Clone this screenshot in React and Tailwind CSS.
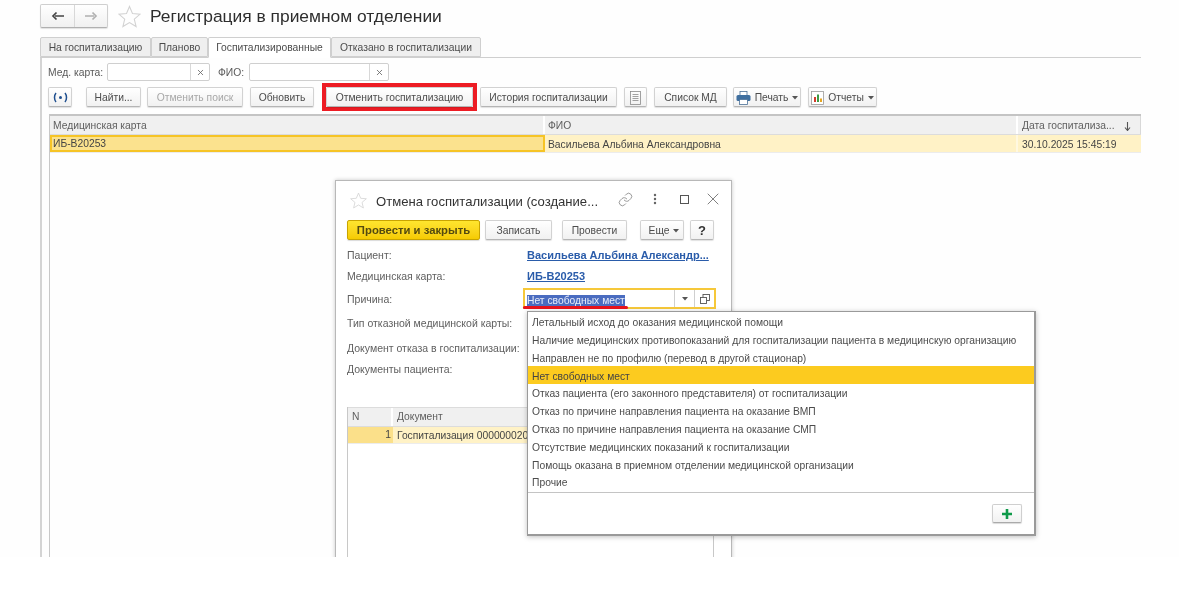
import React from "react";
import { X, Link, EllipsisVertical } from "lucide-react";

const Star = ({ size, color = "#d2d2d2" }) => (
  <svg width={size} height={size} viewBox="0 0 24 24" fill="none" stroke={color} strokeWidth="1.1" className="shrink-0">
    <path d="M12 1.5l3.1 7.4 8 .6-6.1 5.2 1.9 7.8L12 18.3l-6.9 4.2L7 14.7.9 9.5l8-.6z" />
  </svg>
);

const Caret = () => (
  <svg width="6" height="4" viewBox="0 0 6 4" className="shrink-0"><path d="M0 0h6L3 3.5z" fill="#555" /></svg>
);

const Btn = ({ w, children, disabled, className = "" }) => (
  <div
    className={`h-5 shrink-0 flex items-center justify-center gap-1 pt-px rounded-[2px] border border-[#d2d2d2] border-b-[#b5b5b5] bg-gradient-to-b from-white to-[#f1f1f1] shadow-[0_1px_1px_rgba(0,0,0,0.12)] text-[10.3px] ${disabled ? "text-[#a8a8a8]" : "text-[#4c4c4c]"} ${className}`}
    style={{ width: w }}
  >
    {children}
  </div>
);

const Tab = ({ w, active, children }) => (
  <div
    className={`h-[20px] shrink-0 flex items-center justify-center pt-px rounded-t-[2px] border border-[#cfcfcf] text-[10.3px] text-[#4c4c4c] ${active ? "bg-white border-b-white h-[21px] -mb-px z-10" : "bg-[#efefef]"}`}
    style={{ width: w }}
  >
    {children}
  </div>
);

const Field = ({ w }) => (
  <div className="h-[18px] shrink-0 flex rounded-[2px] border border-[#cfcfcf] bg-white" style={{ width: w }}>
    <div className="flex-1" />
    <div className="w-[19px] border-l border-[#d8d8d8] flex items-center justify-center">
      <X size={9} strokeWidth={2.2} color="#666" />
    </div>
  </div>
);

const items = [
  "Летальный исход до оказания медицинской помощи",
  "Наличие медицинских противопоказаний для госпитализации пациента в медицинскую организацию",
  "Направлен не по профилю (перевод в другой стационар)",
  "Нет свободных мест",
  "Отказ пациента (его законного представителя) от госпитализации",
  "Отказ по причине направления пациента на оказание ВМП",
  "Отказ по причине направления пациента на оказание СМП",
  "Отсутствие медицинских показаний к госпитализации",
  "Помощь оказана в приемном отделении медицинской организации",
  "Прочие",
];

const Row = ({ h, label, children, className = "" }) => (
  <div className={`flex items-center shrink-0 ${className}`} style={{ height: h }}>
    <div className="w-[176px] shrink-0 pt-[2px] text-[10.5px] text-[#606060]">{label}</div>
    {children}
  </div>
);

export default function App() {
  return (
    <div className="relative h-[610px] w-[1179px] overflow-hidden bg-white blur-[0.5px] text-[#4c4c4c]" style={{ fontFamily: '"Liberation Sans", Arial, sans-serif' }}>
      <div className="relative h-[557px] overflow-hidden bg-[#fefefe] pl-10 pr-[38px] pt-1 flex flex-col">
        {/* header */}
        <div className="flex items-center h-6 shrink-0">
          <div className="w-[68px] h-6 flex rounded-[2px] border border-[#cfcfcf] border-b-[#b0b0b0] bg-gradient-to-b from-white to-[#f0f0f0] shadow-[0_1px_1px_rgba(0,0,0,0.12)]">
            <div className="w-[34px] flex items-center justify-center border-r border-[#d8d8d8]">
              <svg width="14" height="10" viewBox="0 0 14 10"><path d="M13 5H4M5.5 1.5L2 5l3.5 3.5" stroke="#444" strokeWidth="1.7" fill="none" /></svg>
            </div>
            <div className="flex-1 flex items-center justify-center">
              <svg width="14" height="10" viewBox="0 0 14 10"><path d="M1 5h9M8.5 1.5L12 5 8.5 8.5" stroke="#b0b0b0" strokeWidth="1.7" fill="none" /></svg>
            </div>
          </div>
          <div className="ml-[10px]"><Star size={23} /></div>
          <div className="ml-[9px] text-[17.4px] leading-6 text-[#2e2e2e]">Регистрация в приемном отделении</div>
        </div>

        {/* tabs */}
        <div className="flex mt-[9px] h-[20px] shrink-0 border-b border-[#cfcfcf] box-content">
          <Tab w={111}>На госпитализацию</Tab>
          <Tab w={57}>Планово</Tab>
          <Tab w={123} active>Госпитализированные</Tab>
          <Tab w={150}>Отказано в госпитализации</Tab>
        </div>

        {/* panel */}
        <div className="flex-1 flex flex-col border-l-2 border-[#d4d4d4] pl-[6px] pt-[5px]">
          <div className="flex items-center h-[18px] shrink-0 text-[10.3px]">
            <div className="w-[59px] pt-px text-[#5a5a5a]">Мед. карта:</div>
            <Field w={103} />
            <div className="ml-2 w-[31px] pt-px text-[#5a5a5a]">ФИО:</div>
            <Field w={140} />
          </div>

          <div className="flex items-center h-5 mt-[6px] shrink-0">
            <Btn w={24} className="border-[#c4c4c4]">
              <svg width="15" height="11" viewBox="0 0 15 11" fill="none" stroke="#1f4f8f" strokeWidth="1.5">
                <path d="M3 1C1 3.5 1 7.5 3 10M12 1c2 2.5 2 6.5 0 9" />
                <circle cx="7.5" cy="5.5" r="1.5" fill="#1f4f8f" stroke="none" />
              </svg>
            </Btn>
            <Btn w={55} className="ml-[14px]">Найти...</Btn>
            <Btn w={96} disabled className="ml-[6px]">Отменить поиск</Btn>
            <Btn w={64} className="ml-[7px]">Обновить</Btn>
            <div className="ml-2 shrink-0 border-4 border-[#ed1c24] h-7 flex items-center">
              <Btn w={147}>Отменить госпитализацию</Btn>
            </div>
            <Btn w={137} className="ml-[3px]">История госпитализации</Btn>
            <Btn w={23} className="ml-[7px]">
              <svg width="11" height="14" viewBox="0 0 11 14" fill="none" stroke="#8a8a8a" strokeWidth="0.8">
                <rect x="0.5" y="0.5" width="10" height="13" />
                <path d="M2.5 3.5h6M2.5 5.5h6M2.5 7.5h6M2.5 9.5h6" />
              </svg>
            </Btn>
            <Btn w={73} className="ml-[7px]">Список МД</Btn>
            <Btn w={68} className="ml-[6px]">
              <svg width="15" height="14" viewBox="0 0 15 14">
                <rect x="4" y="0.5" width="7" height="4" fill="#fff" stroke="#4a6f96" strokeWidth="0.8" />
                <rect x="0.5" y="4" width="14" height="6" rx="1.5" fill="#3f6f9f" />
                <rect x="3.5" y="8.5" width="8" height="5" fill="#fff" stroke="#4a6f96" strokeWidth="0.8" />
              </svg>
              <span>Печать</span>
              <Caret />
            </Btn>
            <Btn w={69} className="ml-[7px]">
              <svg width="13" height="14" viewBox="0 0 13 14">
                <rect x="0.5" y="0.5" width="12" height="13" fill="#fff" stroke="#999" strokeWidth="0.8" />
                <rect x="3" y="6" width="2" height="5" fill="#d23c2c" />
                <rect x="6" y="3.5" width="2" height="7.5" fill="#3c9a44" />
                <rect x="9" y="7.5" width="2" height="3.5" fill="#e6a520" />
              </svg>
              <span>Отчеты</span>
              <Caret />
            </Btn>
          </div>

          {/* table */}
          <div className="mt-[7px] ml-px flex-1 border-l border-[#c8c8c8] text-[10.3px] flex flex-col">
            <div className="flex h-[21px] shrink-0 border-t-2 border-[#c4c4c4] border-b border-b-[#dcdcdc] bg-[#f0f0f0] text-[#5e5e5e]">
              <div className="w-[495px] pl-[3px] pt-[2px] flex items-center border-r-2 border-white">Медицинская карта</div>
              <div className="w-[473px] pl-[3px] pt-[2px] flex items-center border-r-2 border-white">ФИО</div>
              <div className="flex-1 pl-1 pr-[9px] pt-[2px] flex items-center justify-between border-r border-[#d8d8d8]">
                <span>Дата госпитализа...</span>
                <svg width="7" height="9" viewBox="0 0 7 9" fill="none" stroke="#555" strokeWidth="1.1"><path d="M3.5 0v8M1 5.5l2.5 3 2.5-3" /></svg>
              </div>
            </div>
            <div className="flex h-[18px] shrink-0 bg-[#fff2c6] border-b border-[#ececec] text-[#444]">
              <div className="w-[495px] pl-px pt-px flex items-center bg-[#fbe28e] border-2 border-[#f6c426]">ИБ-В20253</div>
              <div className="w-[473px] pl-[3px] pt-[2px] flex items-center border-r-2 border-[#fff8e0]">Васильева Альбина Александровна</div>
              <div className="flex-1 pl-1 pt-[2px] flex items-center">30.10.2025 15:45:19</div>
            </div>
          </div>
        </div>

        {/* dialog */}
        <div className="absolute left-[335px] top-[180px] w-[397px] h-[400px] bg-white border border-[#b8b8b8] shadow-[0_0_4px_rgba(0,0,0,0.22)] pl-[11px] pr-[17px] flex flex-col">
          <div className="h-[39px] shrink-0 flex items-center relative">
            <div className="ml-[3px]"><Star size={17} /></div>
            <div className="ml-[9px] text-[13.1px] text-[#333] mt-[3px]">Отмена госпитализации (создание...</div>
            <Link size={15} strokeWidth={1.4} color="#8a8a8a" className="absolute left-[271px] top-[11px]" />
            <EllipsisVertical size={14} strokeWidth={2.2} color="#666" className="absolute left-[301px] top-[11px]" />
            <div className="absolute left-[333px] top-[14px] w-[9px] h-[9px] border border-[#555]" />
            <X size={20} strokeWidth={1} color="#666" className="absolute left-[356px] top-[8px]" />
          </div>

          <div className="flex h-5 shrink-0">
            <div className="w-[133px] h-5 shrink-0 flex items-center justify-center pt-px rounded-[2px] border border-[#c9a400] bg-gradient-to-b from-[#ffe52e] to-[#f6cb00] text-[11.3px] font-bold text-[#544a10] shadow-[0_1px_1px_rgba(0,0,0,0.15)]">Провести и закрыть</div>
            <Btn w={67} className="ml-[5px]">Записать</Btn>
            <Btn w={65} className="ml-[10px]">Провести</Btn>
            <Btn w={44} className="ml-[13px] pl-1">Еще <Caret /></Btn>
            <Btn w={24} className="ml-[6px] font-bold !text-[13px] !text-[#333]">?</Btn>
          </div>

          <Row h={20} label="Пациент:" className="mt-[5px]">
            <div className="ml-1 text-[11px] font-bold underline text-[#2a5caa]">Васильева Альбина Александр...</div>
          </Row>
          <Row h={20} label="Медицинская карта:" className="mt-px">
            <div className="ml-1 text-[11px] font-bold underline text-[#2a5caa]">ИБ-В20253</div>
          </Row>

          <Row h={21} label="Причина:" className="mt-[2px] relative">
            <div className="w-[193px] h-[21px] shrink-0 flex items-center border-2 border-[#f6c83a] bg-white">
              <div className="flex-1 pl-[2px]">
                <span className="bg-[#4a6cc0] text-[10.3px] text-[#e8ecf8]">Нет свободных мест</span>
              </div>
              <div className="w-5 h-[17px] flex items-center justify-center border-l border-[#cfcfcf]"><Caret /></div>
              <div className="w-5 h-[17px] flex items-center justify-center border-l border-[#cfcfcf]">
                <svg width="10" height="10" viewBox="0 0 10 10" fill="none" stroke="#555" strokeWidth="0.9"><rect x="3" y="0.5" width="6.5" height="6" /><rect x="0.5" y="3.5" width="6" height="6" fill="#fff" /></svg>
              </div>
            </div>
            <div className="absolute left-[176px] top-[18px] w-[105px] h-[3px] rounded-full bg-[#e8131c]" />
          </Row>

          <Row h={20} label="Тип отказной медицинской карты:" className="mt-1" />
          <Row h={20} label="Документ отказа в госпитализации:" className="mt-[5px]" />
          <Row h={20} label="Документы пациента:" className="mt-px" />

          <div className="mt-[28px] flex-1 border-l border-r border-[#c8c8c8] text-[10.3px]">
            <div className="flex h-[20px] border-t border-b border-[#dcdcdc] bg-[#f0f0f0] text-[#5e5e5e]">
              <div className="w-[45px] pl-[4px] flex items-center border-r-2 border-white">N</div>
              <div className="pl-[4px] flex items-center">Документ</div>
            </div>
            <div className="flex h-[17px] pt-px bg-[#fff2c6] border-b border-[#ececec] text-[#444]">
              <div className="w-[45px] pr-[2px] -mt-px flex items-center justify-end bg-[#fbe08a]">1</div>
              <div className="pl-[4px] flex items-center whitespace-nowrap">Госпитализация 000000020</div>
            </div>
          </div>
        </div>

        {/* dropdown */}
        <div className="absolute left-[527px] top-[311px] w-[509px] h-[225px] bg-white border border-[#9a9a9a] border-b-2 border-r-2 shadow-[0_1px_5px_rgba(0,0,0,0.25)] flex flex-col text-[10.3px] text-[#4c4c4c]">
          <div className="h-[181px] shrink-0 border-b border-[#c4c4c4] pt-px">
            {items.map((t, i) => (
              <div key={t} className={`h-[17.8px] pl-[4px] pt-[2px] flex items-center whitespace-nowrap ${i === 3 ? "bg-[#fccb1f] text-[#444]" : ""}`}>{t}</div>
            ))}
          </div>
          <div className="flex-1 flex items-center justify-end pr-[12px]">
            <div className="w-[30px] h-[19px] flex items-center justify-center rounded-[2px] border border-[#cfcfcf] border-b-[#aaa] bg-gradient-to-b from-white to-[#f1f1f1] shadow-[0_1px_1px_rgba(0,0,0,0.15)]">
              <svg width="10" height="10" viewBox="0 0 10 10"><path d="M3.7 0h2.6v3.7H10v2.6H6.3V10H3.7V6.3H0V3.7h3.7z" fill="#0f9a4a" /></svg>
            </div>
          </div>
        </div>
      </div>
    </div>
  );
}
